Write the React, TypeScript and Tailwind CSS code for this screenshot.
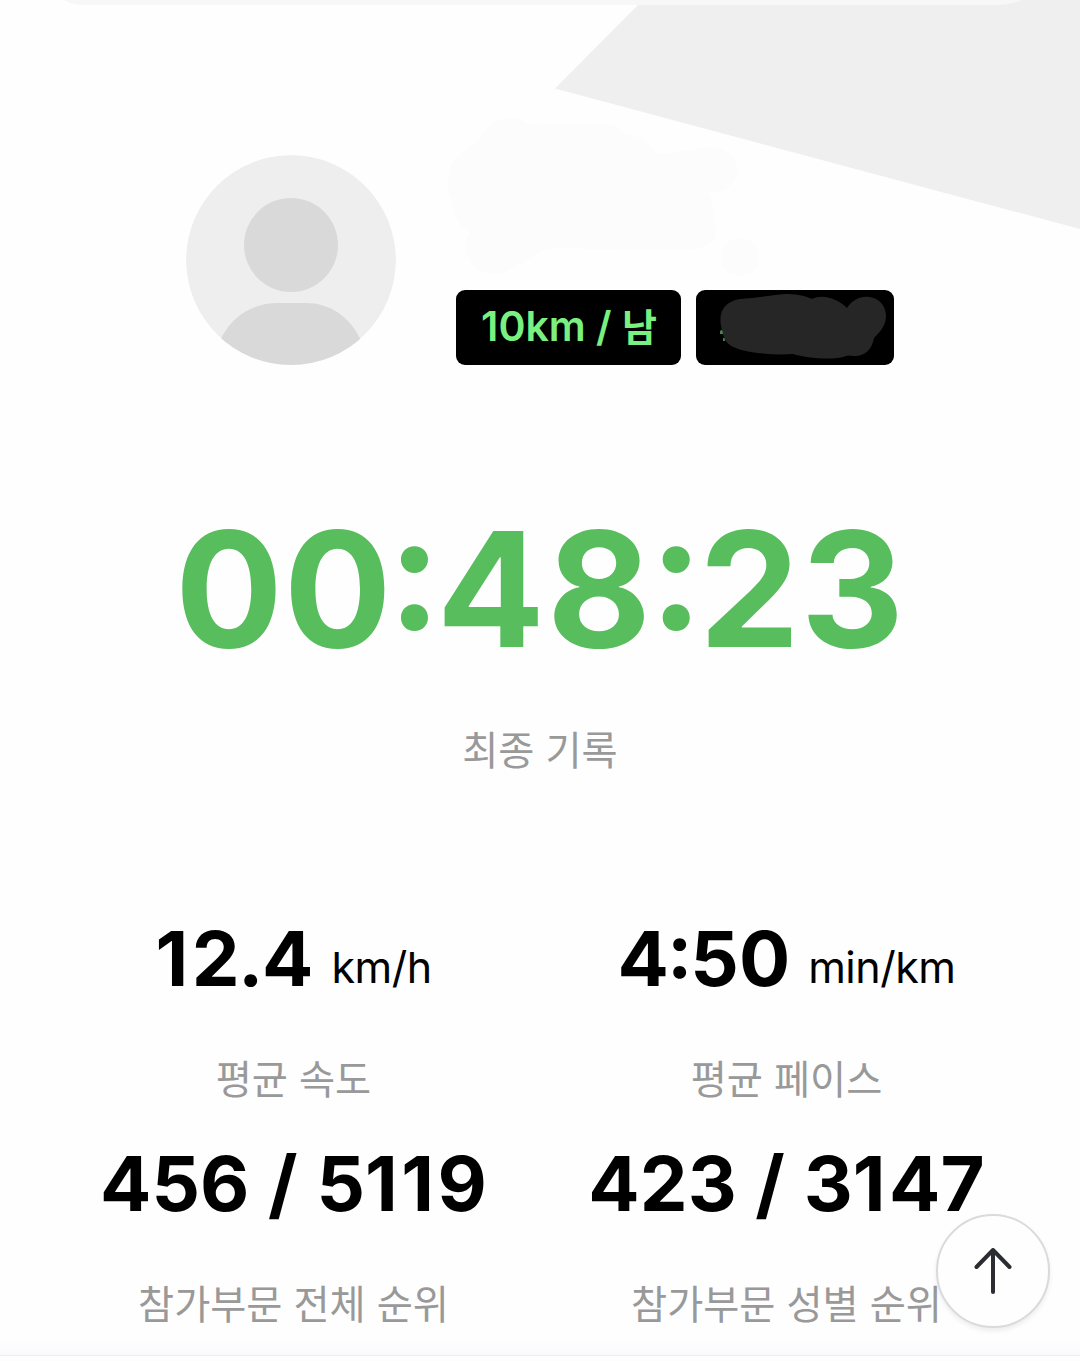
import type { ReactNode } from 'react'

const One = () => <span className="tracking-[3.5px]">1</span>
const Slash = () => <span className="tracking-[0.5px]">{' / '}</span>

const STATS: { value: ReactNode; unit?: string; label: string }[] = [
  {
    value: (
      <>
        <One />
        <span className="tracking-[-1.5px]">2.</span>4
      </>
    ),
    unit: 'km/h',
    label: '평균 속도',
  },
  {
    value: (
      <>
        <span className="tracking-[-2px] [font-feature-settings:'case']">4:</span>50
      </>
    ),
    unit: 'min/km',
    label: '평균 페이스',
  },
  {
    value: (
      <>
        456
        <Slash />5<One />
        <One />9
      </>
    ),
    label: '참가부문 전체 순위',
  },
  {
    value: (
      <>
        423
        <Slash />3<One />
        47
      </>
    ),
    label: '참가부문 성별 순위',
  },
]

function Avatar() {
  return (
    <svg viewBox="0 0 210 210" className="w-[210px] h-[210px] rounded-full shrink-0">
      <circle cx="105" cy="105" r="105" fill="#eeeeee" />
      <circle cx="105" cy="90" r="47" fill="#d9d9d9" />
      <path d="M92 148 H120 C143 148 163 161 174 183.500 L174 210 H35 V183.500 C46 161 67 148 92 148 Z" fill="#d9d9d9" />
    </svg>
  )
}

function Stat({ value, unit, label }: { value: ReactNode; unit?: string; label: string }) {
  return (
    <div className="flex flex-col items-center h-[225px] whitespace-nowrap">
      <div className="flex gap-[18px] h-[92px] text-black">
        <span className="leading-[88px] text-[76px] font-bold">{value}</span>
        {unit && <span className="leading-[106px] text-[43px] tracking-[-0.5px]">{unit}</span>}
      </div>
      <div className="mt-11 leading-[60px] text-[39.25px] text-[#999999]">{label}</div>
    </div>
  )
}

export default function App() {
  return (
    <div className="relative w-[1080px] h-[1361px] overflow-hidden bg-[#fefefe] font-['Inter','Noto_Sans_CJK_KR',sans-serif]">
      {/* Background wedge and the edge of the card above */}
      <svg viewBox="0 0 1080 240" className="absolute inset-x-0 top-0 w-[1080px] h-[240px]">
        <path d="M643 0 L555 88.500 L1080 229 V0 Z" fill="#efefef" />
        <path d="M60 -10 H1022 V0 Q1010 5 998 5 H84 Q72 5 64 0 Z" fill="#f7f7f7" />
      </svg>

      <main className="relative flex flex-col items-center pt-[155px]">
        {/* Runner profile */}
        <div className="flex gap-[60px]">
          <Avatar />
          <div className="relative flex items-end gap-[15px]">
            <svg viewBox="0 0 340 190" className="absolute left-[-16px] top-[-55px] w-[340px] h-[190px]" fill="#fcfcfc">
              <path d="M42 37 C50 18 70 13 86 23 Q94 26 106 24 H165 Q176 24 183 33 C198 35 211 44 216 53 C230 54 245 51 260 48 C281 43 297 54 297 70 C297 84 284 94 267 92 C273 100 274 108 273 116 C278 128 277 140 270 144 C260 149 250 150 235 150 H180 C150 150 125 147 109 149 C88 155 72 174 53 174 C30 174 18 148 31 130 C20 128 12 117 12 99 C4 86 7 70 16 58 Z" />
              <circle cx="300" cy="157" r="19" />
            </svg>
            <div className="w-[225px] h-[75px] rounded-[9px] bg-black pl-px text-center text-[41px] leading-[73px] font-semibold text-[#79f07f] whitespace-nowrap">
              10km / <span className="text-[38px]">남</span>
            </div>
            <div className="w-[198px] h-[75px] rounded-[9px] bg-black">
              <svg viewBox="0 0 198 75" className="w-[198px] h-[75px]">
                <path d="M24 41 L27 39 V44 H24 Z M27 48 H29 V51 H27 Z" fill="#3f8a45" />
                <path d="M44 9 C60 8 75 5 89 4 C98 4 108 5 116 9 C128 3 143 10 151 18 C157 9 165 6 173 7 C184 8 190 17 190 26 C190 36 183 43 178 48 C176 60 168 67 157 66 Q153 65 150 66 C137 71 110 68 97 64 C82 65 68 64 55 62 C39 59 28 55 27 43 C21 26 25 12 44 9 Z" fill="#262626" />
              </svg>
            </div>
          </div>
        </div>

        <div className="mt-[124px] h-[200px] leading-[200px] text-[160px] tracking-[1px] font-bold text-[#57bd5d] whitespace-nowrap [font-feature-settings:'case']">
          0<span className="tracking-[-4px]">0</span>
          <span className="tracking-[-4.5px]">:</span>
          <span className="tracking-[2px]">4</span>
          <span className="tracking-[-1.5px]">8</span>
          <span className="tracking-[-4px]">:</span>
          23
        </div>
        <div className="mt-8 leading-[60px] text-[39.25px] text-[#999999]">최종 기록</div>

        <div className="mt-[133px] grid grid-cols-2 w-[986px]">
          {STATS.map((stat) => (
            <Stat key={stat.label} {...stat} />
          ))}
        </div>
      </main>

      <div className="absolute inset-x-0 bottom-0 h-[22px] bg-linear-to-b from-[#fefefe] to-[#f7f8fa]">
        <div className="absolute inset-x-0 bottom-0 h-[6px] border-t border-[#ececee] bg-[#fdfdfd]" />
      </div>

      <button
        aria-label="Top"
        className="absolute left-[936px] top-[1214px] w-[114px] h-[114px] rounded-full border-2 border-[#dadada] bg-[#fefefe] shadow-[0_3px_5px_rgba(0,0,0,0.07)] flex items-center justify-center"
      >
        <svg viewBox="0 0 44 50" className="w-[44px] h-[50px]" fill="none" stroke="#2c2d33" strokeWidth="4" strokeLinecap="round" strokeLinejoin="round">
          <path d="M22 46 V4 M5.500 21 L22 4 L38.500 21" />
        </svg>
      </button>
    </div>
  )
}
